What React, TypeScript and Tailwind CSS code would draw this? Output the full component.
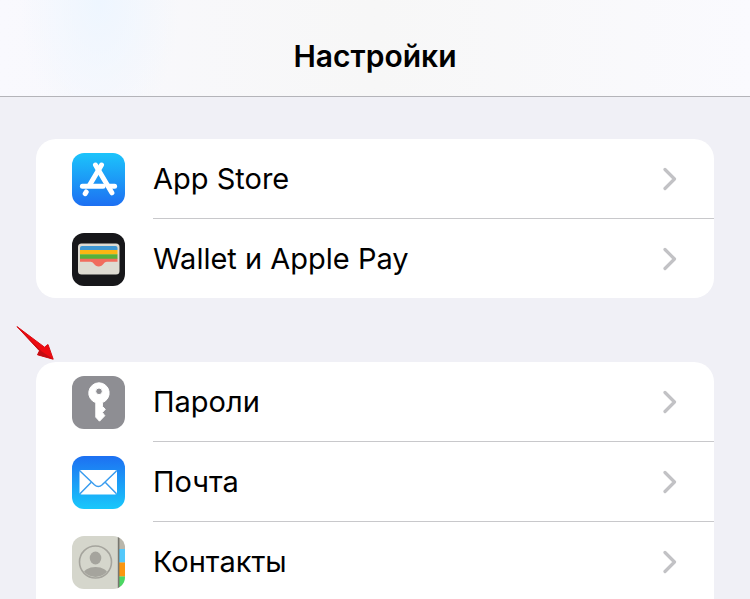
import type { ReactNode } from "react";
import clsx from "clsx";

interface SettingsItem {
  label: string;
  href: string;
  icon: ReactNode;
}

function AppStoreIcon() {
  return (
    <svg viewBox="0 0 53 53" className="size-full" aria-hidden="true">
      <defs>
        <linearGradient id="appstore-bg" x1="0" y1="0" x2="0" y2="1">
          <stop offset="0" stopColor="#1cc4fb" />
          <stop offset="1" stopColor="#1d6ff2" />
        </linearGradient>
      </defs>
      <rect width="53" height="53" rx="12" fill="url(#appstore-bg)" />
      <g stroke="#fff" strokeWidth="5" strokeLinecap="round" fill="none">
        <path d="M29.500 12 17.500 32.300" />
        <path d="M23.500 12 39.900 39.800" />
        <path d="M10.400 33.300H31" />
        <path d="M37.500 33.300H42.600" />
        <path d="M14.200 39 13.200 40.600" />
      </g>
    </svg>
  );
}

function WalletIcon() {
  return (
    <svg viewBox="0 0 53 53" className="size-full" aria-hidden="true">
      <rect width="53" height="53" rx="12" fill="#17171a" />
      <rect x="6" y="10.5" width="41.5" height="31" rx="3.5" fill="#dedbd2" />
      <path d="M8 17v-2a2 2 0 0 1 2-2h33.5a2 2 0 0 1 2 2v2z" fill="#3f97d3" />
      <rect x="8" y="17" width="37.5" height="4.5" fill="#fbb713" />
      <rect x="8" y="21.3" width="37.5" height="4.7" fill="#56b13a" />
      <path
        d="M8 25.7h37.5v3H35c-1.600 0-2.300.7-3.200 1.900-1.500 1.900-3 2.900-5.100 2.900s-3.600-1-5.100-2.900c-.9-1.200-1.600-1.900-3.200-1.900H8z"
        fill="#f16c5e"
      />
    </svg>
  );
}

function PasswordsIcon() {
  return (
    <svg viewBox="0 0 53 53" className="size-full" aria-hidden="true">
      <rect width="53" height="53" rx="12" fill="#8e8e93" />
      <path
        fill="#fff"
        stroke="#fff"
        strokeWidth="1"
        strokeLinejoin="round"
        fillRule="evenodd"
        d="M27 6.800a10.200 10.200 0 0 0-3.200 19.900v14.500l3.700 4 5.300-5.500-2.400-3.200 2.900-3.200-2.900-3v-3.700A10.200 10.200 0 0 0 27 6.800zm0 5.200a3.300 3.300 0 1 1 0 6.600 3.300 3.300 0 0 1 0-6.600z"
      />
    </svg>
  );
}

function MailIcon() {
  return (
    <svg viewBox="0 0 53 53" className="size-full" aria-hidden="true">
      <defs>
        <linearGradient id="mail-bg" x1="0" y1="0" x2="0" y2="1">
          <stop offset="0" stopColor="#1d70f2" />
          <stop offset="1" stopColor="#19c8fb" />
        </linearGradient>
      </defs>
      <rect width="53" height="53" rx="12" fill="url(#mail-bg)" />
      <rect x="7.5" y="14" width="37.5" height="24.5" rx="2" fill="#fff" />
      <g stroke="#399cef" strokeWidth="1.5" fill="none">
        <path d="M8 15 22.400 28.800c2.400 2.200 5.400 2.200 7.800 0L44.500 15" />
        <path d="M8 37.800 19.300 26.200M44.500 37.800 33.200 26.200" />
      </g>
    </svg>
  );
}

function ContactsIcon() {
  return (
    <svg viewBox="0 0 53 53" className="size-full" aria-hidden="true">
      <defs>
        <clipPath id="contacts-tile">
          <rect width="53" height="53" rx="12" />
        </clipPath>
        <clipPath id="contacts-avatar">
          <circle cx="23.5" cy="26" r="15" />
        </clipPath>
      </defs>
      <g clipPath="url(#contacts-tile)">
        <rect width="53" height="53" fill="#d5d6cc" />
        <rect x="47" width="6" height="13" fill="#b9b6ab" />
        <rect x="47" y="13" width="6" height="13.5" fill="#54c8fa" />
        <rect x="47" y="26.5" width="6" height="14" fill="#fb9610" />
        <rect x="47" y="40.5" width="6" height="13" fill="#4bd763" />
        <rect x="45.8" width="1.6" height="53" fill="#77766f" />
      </g>
      <g clipPath="url(#contacts-avatar)" fill="#a5a49d">
        <ellipse cx="23.5" cy="22" rx="5.8" ry="6.5" />
        <ellipse cx="23.5" cy="39" rx="12.5" ry="8" />
      </g>
      <circle cx="23.5" cy="26" r="16" fill="none" stroke="#a5a49d" strokeWidth="1.6" />
    </svg>
  );
}

function Chevron() {
  return (
    <svg viewBox="0 0 14 24" className="h-6 w-3.5 shrink-0" aria-hidden="true">
      <path
        d="M2 2.500 11.500 12 2 21.500"
        fill="none"
        stroke="#c2c2c5"
        strokeWidth="3.2"
        strokeLinecap="round"
        strokeLinejoin="round"
      />
    </svg>
  );
}

function PointerArrow() {
  return (
    <svg
      viewBox="0 0 40 36"
      className="pointer-events-none absolute -top-9 -left-5 h-9 w-10"
      aria-hidden="true"
    >
      <path
        d="M1 .6 28.500 21.200 32 18.500 37.200 33.200 21.500 28.800 23.500 24.800z"
        fill="#ee0a10"
        stroke="#d90c12"
        strokeWidth="1"
        strokeLinejoin="round"
      />
      <path d="M1 .6 23.500 24.800 21.500 28.800 37.200 33.200 25.500 25.200z" fill="#c20c12" />
    </svg>
  );
}

const storeItems: SettingsItem[] = [
  { label: "App Store", href: "#app-store", icon: <AppStoreIcon /> },
  { label: "Wallet и Apple Pay", href: "#wallet", icon: <WalletIcon /> },
];

const accountItems: SettingsItem[] = [
  { label: "Пароли", href: "#passwords", icon: <PasswordsIcon /> },
  { label: "Почта", href: "#mail", icon: <MailIcon /> },
  { label: "Контакты", href: "#contacts", icon: <ContactsIcon /> },
];

interface SettingsGroupProps {
  items: SettingsItem[];
  continues?: boolean;
}

function SettingsGroup({ items, continues = false }: SettingsGroupProps) {
  return (
    <ul
      className={clsx(
        "overflow-hidden bg-white",
        continues ? "rounded-t-[20px] pb-5" : "rounded-[20px]",
      )}
    >
      {items.map((item, idx) => (
        <li key={item.href}>
          <a href={item.href} className="flex items-stretch gap-7 pl-9">
            <span className="mt-3.5 size-[53px] shrink-0">{item.icon}</span>
            <span
              className={clsx(
                "box-content flex h-[79px] flex-1 items-center justify-between pr-[37px]",
                idx < items.length - 1 && "border-b border-[#c8c8cb]",
              )}
            >
              <span className="text-[29px] leading-10">{item.label}</span>
              <Chevron />
            </span>
          </a>
        </li>
      ))}
    </ul>
  );
}

export default function App() {
  return (
    <div className="flex h-screen flex-col overflow-hidden bg-[#f0f0f6] font-['Inter','Liberation_Sans',sans-serif] text-black">
      <header className="shrink-0 border-b border-[#b4b4b9] bg-linear-to-r from-[#f9f9fe] via-[#f7f7f7] to-[#fafafe]">
        <div className="flex justify-center bg-[radial-gradient(ellipse_80px_140px_at_100px_0px,#eef6ff,transparent)] pt-9 pb-5">
          <h1 className="text-[30px] leading-10 font-semibold">Настройки</h1>
        </div>
      </header>
      <main className="flex flex-col gap-16 px-9 pt-[42px]">
        <SettingsGroup items={storeItems} />
        <div className="relative">
          <SettingsGroup items={accountItems} continues />
          <PointerArrow />
        </div>
      </main>
    </div>
  );
}
